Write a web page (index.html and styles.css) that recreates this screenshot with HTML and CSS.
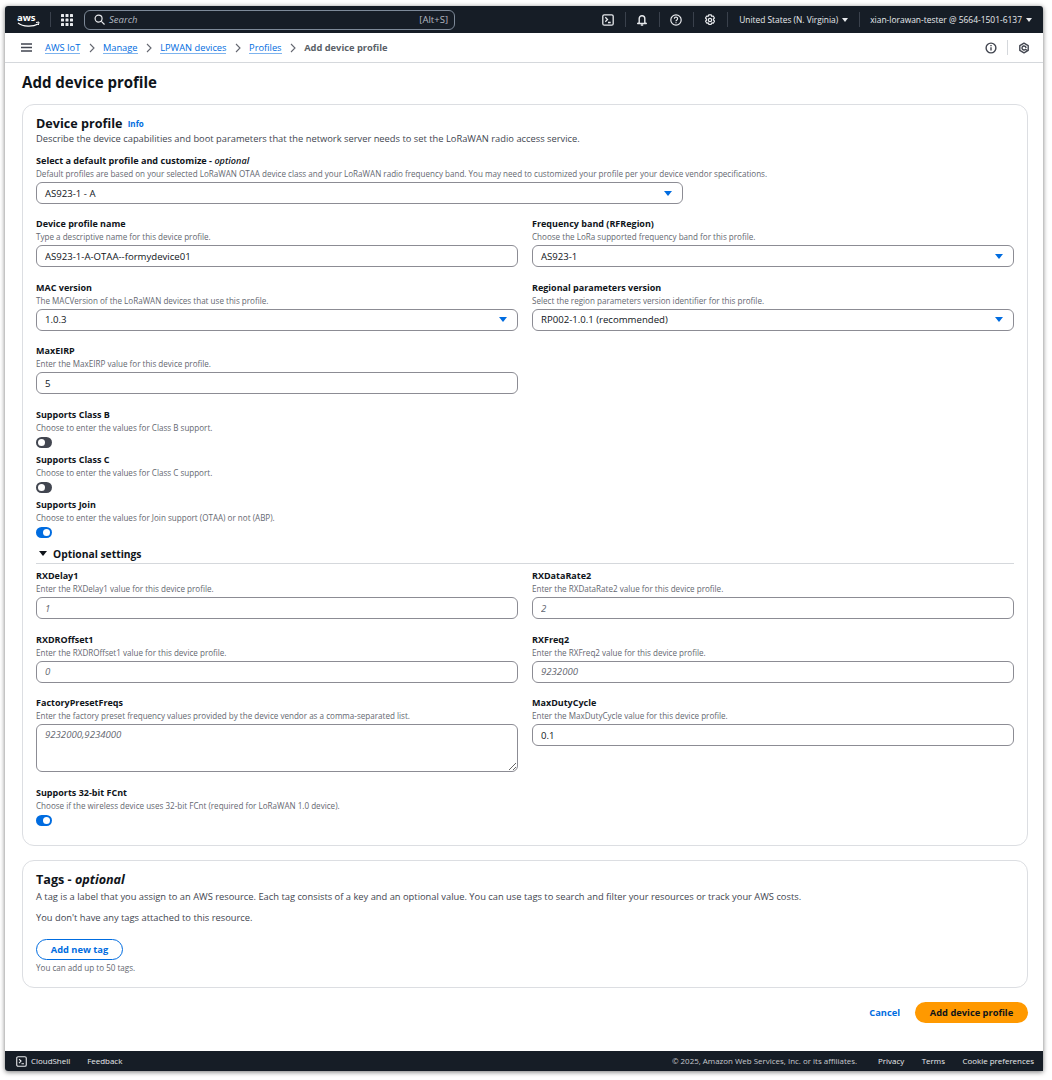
FILE: index.html
```html
<!DOCTYPE html>
<html lang="en">
<head>
<meta charset="utf-8">
<title>Add device profile</title>
<link rel="stylesheet" href="styles.css">
</head>
<body>
<div class="window">
  <header class="topbar">
    <svg class="aws-logo" viewBox="0 0 24 16" width="24" height="16"><text x="0" y="9" class="aws-text">aws</text><path d="M1 11c5 4 15 4 20 1" fill="none" stroke="#fff" stroke-width="1.2"/><path d="M19 10.500l3-.5-.6 3" fill="none" stroke="#fff" stroke-width="1"/></svg>
    <span class="top-sep"></span>
    <svg class="grid-icon" viewBox="0 0 12 12" width="12" height="12" fill="#e8eaed"><rect x="0" y="0" width="3" height="3" rx=".6"/><rect x="4.500" y="0" width="3" height="3" rx=".6"/><rect x="9" y="0" width="3" height="3" rx=".6"/><rect x="0" y="4.500" width="3" height="3" rx=".6"/><rect x="4.500" y="4.500" width="3" height="3" rx=".6"/><rect x="9" y="4.500" width="3" height="3" rx=".6"/><rect x="0" y="9" width="3" height="3" rx=".6"/><rect x="4.500" y="9" width="3" height="3" rx=".6"/><rect x="9" y="9" width="3" height="3" rx=".6"/></svg>
    <div class="search">
      <svg viewBox="0 0 12 12" width="11" height="11" fill="none" stroke="#e8eaed" stroke-width="1.300"><circle cx="5" cy="5" r="3.800"/><path d="M8 8l3.500 3.500"/></svg>
      <span class="search-text">Search</span>
      <span class="search-key">[Alt+S]</span>
    </div>
    <div class="top-right">
      <svg class="top-icon" viewBox="0 0 12 12" width="12" height="12" fill="none" stroke="#e8eaed" stroke-width="1.300"><rect x=".8" y=".8" width="10.400" height="10.400" rx="1.500"/><path d="M3.300 3.300l2.200 2.200-2.200 2.200M6 8.500h2.700"/></svg>
      <span class="top-sep"></span>
      <svg class="top-icon" viewBox="0 0 12 12" width="12" height="12" fill="none" stroke="#e8eaed"><path d="M3.200 8.800V4.500a2.800 2.800 0 015.600 0v4.300l1.500.7H1.700z" stroke-width="1.400" stroke-linejoin="round"/><path d="M4.800 11h2.400" stroke-width="1.300"/></svg>
      <span class="top-sep"></span>
      <svg class="top-icon" viewBox="0 0 12 12" width="12" height="12" fill="none" stroke="#e8eaed" stroke-width="1.200"><circle cx="6" cy="6" r="5.200"/><path d="M4.400 4.700a1.600 1.600 0 112.500 1.300c-.6.400-.9.700-.9 1.300M6 8.200v1.100"/></svg>
      <span class="top-sep"></span>
      <svg class="top-icon" viewBox="0 0 12 12" width="12" height="12" fill="none" stroke="#e8eaed" stroke-width="1.200"><path d="M4.800.8h2.400l.5 1.500 1.500-.3 1.200 2-1 1.200.1.800 1 1.200-1.200 2-1.500-.3-.6 1.500H4.800l-.5-1.500-1.500.3-1.200-2 1-1.200-.1-.8-1-1.200 1.200-2 1.500.3z" stroke-linejoin="round"/><circle cx="6" cy="6" r="1.700"/></svg>
      <span class="top-sep settings-sep"></span>
      <span class="top-menu region">United States (N. Virginia)<i class="mini-caret"></i></span>
      <span class="top-sep"></span>
      <span class="top-menu">xian-lorawan-tester @ 5664-1501-6137<i class="mini-caret"></i></span>
    </div>
  </header>

  <nav class="crumbbar">
    <svg class="menu-icon" viewBox="0 0 11 9" width="11" height="9" fill="none" stroke="#424650" stroke-width="1.400"><path d="M0 1h11M0 4.500h11M0 8h11"/></svg>
    <a class="crumb">AWS IoT</a><svg class="chev" viewBox="0 0 6 10" width="6" height="10" fill="none" stroke="#656871" stroke-width="1.100"><path d="M1 1l4 4-4 4"/></svg>
    <a class="crumb">Manage</a><svg class="chev" viewBox="0 0 6 10" width="6" height="10" fill="none" stroke="#656871" stroke-width="1.100"><path d="M1 1l4 4-4 4"/></svg>
    <a class="crumb">LPWAN devices</a><svg class="chev" viewBox="0 0 6 10" width="6" height="10" fill="none" stroke="#656871" stroke-width="1.100"><path d="M1 1l4 4-4 4"/></svg>
    <a class="crumb">Profiles</a><svg class="chev" viewBox="0 0 6 10" width="6" height="10" fill="none" stroke="#656871" stroke-width="1.100"><path d="M1 1l4 4-4 4"/></svg>
    <span class="crumb-current">Add device profile</span>
    <div class="crumb-tools">
      <svg viewBox="0 0 12 12" width="12" height="12" fill="none" stroke="#424650" stroke-width="1.400"><circle cx="6" cy="6" r="4.900"/><path d="M6 5.200v3.300M6 3.100v1.200"/></svg>
      <span class="tool-sep"></span>
      <svg viewBox="0 0 12 12" width="12" height="12" fill="none" stroke="#424650" stroke-width="1.400"><path d="M6 1.200l4.200 2.400v4.800L6 10.800 1.800 8.400V3.600z" stroke-linejoin="round"/><path d="M8 6a2 2 0 10-.6 1.400L9.500 8.500"/></svg>
    </div>
  </nav>

  <main class="content">
    <h1 class="page-title">Add device profile</h1>

    <section class="card profile-card">
      <h2 class="card-title">Device profile <a class="info">Info</a></h2>
      <p class="card-desc">Describe the device capabilities and boot parameters that the network server needs to set the LoRaWAN radio access service.</p>

      <div class="field default-field">
        <label class="label">Select a default profile and customize - <em>optional</em></label>
        <p class="desc">Default profiles are based on your selected LoRaWAN OTAA device class and your LoRaWAN radio frequency band. You may need to customized your profile per your device vendor specifications.</p>
        <div class="select default-select"><span>AS923-1 - A</span><i class="caret"></i></div>
      </div>

      <div class="form-grid">
        <div class="field">
          <label class="label">Device profile name</label>
          <p class="desc">Type a descriptive name for this device profile.</p>
          <input class="input" value="AS923-1-A-OTAA--formydevice01">
        </div>
        <div class="field">
          <label class="label">Frequency band (RFRegion)</label>
          <p class="desc">Choose the LoRa supported frequency band for this profile.</p>
          <div class="select"><span>AS923-1</span><i class="caret"></i></div>
        </div>
        <div class="field">
          <label class="label">MAC version</label>
          <p class="desc">The MACVersion of the LoRaWAN devices that use this profile.</p>
          <div class="select"><span>1.0.3</span><i class="caret"></i></div>
        </div>
        <div class="field">
          <label class="label">Regional parameters version</label>
          <p class="desc">Select the region parameters version identifier for this profile.</p>
          <div class="select"><span>RP002-1.0.1 (recommended)</span><i class="caret"></i></div>
        </div>
        <div class="field">
          <label class="label">MaxEIRP</label>
          <p class="desc">Enter the MaxEIRP value for this device profile.</p>
          <input class="input" value="5">
        </div>
      </div>

      <div class="toggles">
        <div class="toggle-field">
          <label class="label">Supports Class B</label>
          <p class="desc">Choose to enter the values for Class B support.</p>
          <span class="toggle"></span>
        </div>
        <div class="toggle-field">
          <label class="label">Supports Class C</label>
          <p class="desc">Choose to enter the values for Class C support.</p>
          <span class="toggle"></span>
        </div>
        <div class="toggle-field">
          <label class="label">Supports Join</label>
          <p class="desc">Choose to enter the values for Join support (OTAA) or not (ABP).</p>
          <span class="toggle on"></span>
        </div>
      </div>

      <div class="expander"><i class="expander-caret"></i>Optional settings</div>

      <div class="form-grid">
        <div class="field">
          <label class="label">RXDelay1</label>
          <p class="desc">Enter the RXDelay1 value for this device profile.</p>
          <input class="input" placeholder="1">
        </div>
        <div class="field">
          <label class="label">RXDataRate2</label>
          <p class="desc">Enter the RXDataRate2 value for this device profile.</p>
          <input class="input" placeholder="2">
        </div>
        <div class="field">
          <label class="label">RXDROffset1</label>
          <p class="desc">Enter the RXDROffset1 value for this device profile.</p>
          <input class="input" placeholder="0">
        </div>
        <div class="field">
          <label class="label">RXFreq2</label>
          <p class="desc">Enter the RXFreq2 value for this device profile.</p>
          <input class="input" placeholder="9232000">
        </div>
        <div class="field">
          <label class="label">FactoryPresetFreqs</label>
          <p class="desc">Enter the factory preset frequency values provided by the device vendor as a comma-separated list.</p>
          <textarea class="input textarea" placeholder="9232000,9234000"></textarea>
        </div>
        <div class="field">
          <label class="label">MaxDutyCycle</label>
          <p class="desc">Enter the MaxDutyCycle value for this device profile.</p>
          <input class="input" value="0.1">
        </div>
      </div>

      <div class="toggle-field fcnt">
        <label class="label">Supports 32-bit FCnt</label>
        <p class="desc">Choose if the wireless device uses 32-bit FCnt (required for LoRaWAN 1.0 device).</p>
        <span class="toggle on"></span>
      </div>
    </section>

    <section class="card tags-card">
      <h2 class="card-title">Tags - <em>optional</em></h2>
      <p class="card-desc tags-desc">A tag is a label that you assign to an AWS resource. Each tag consists of a key and an optional value. You can use tags to search and filter your resources or track your AWS costs.</p>
      <p class="empty-note">You don't have any tags attached to this resource.</p>
      <button class="btn-outline">Add new tag</button>
      <p class="desc tag-limit">You can add up to 50 tags.</p>
    </section>

    <div class="actions">
      <a class="cancel">Cancel</a>
      <button class="btn-primary">Add device profile</button>
    </div>
  </main>

  <footer class="footer">
    <svg viewBox="0 0 12 12" width="11" height="11" fill="none" stroke="#e8eaed" stroke-width="1.200"><rect x=".8" y=".8" width="10.400" height="10.400" rx="1.500"/><path d="M3.300 3.300l2.200 2.200-2.200 2.200M6 8.500h2.700"/></svg>
    <span class="foot-cloud">CloudShell</span>
    <span class="foot-feedback">Feedback</span>
    <span class="foot-copy">© 2025, Amazon Web Services, Inc. or its affiliates.</span>
    <span class="foot-link foot-privacy">Privacy</span>
    <span class="foot-link">Terms</span>
    <span class="foot-link">Cookie preferences</span>
  </footer>
</div>
</body>
</html>
```
FILE: styles.css
```css
* { box-sizing: border-box; }
html, body { margin: 0; padding: 0; background: #fff; }
body { font-family: "Open Sans", "Noto Sans", sans-serif; color: #0f141a; padding: 6px 0 0 5px; height: 1080px; overflow: hidden; }
p, h1, h2 { margin: 0; }
.window { width: 1038px; height: 1065px; display: flex; flex-direction: column; background: #fff; box-shadow: 0 1px 5px rgba(0,0,0,.55); border-radius: 3px 3px 0 3px; overflow: hidden; }

.topbar { height: 27px; flex: none; background: #161d26; display: flex; align-items: center; padding: 0 11px 0 12px; color: #e8eaed; }
.aws-logo { flex: none; }
.aws-text { font: 700 9.500px "Open Sans", sans-serif; fill: #fff; }
.top-sep { width: 1px; height: 15px; background: #3a414c; flex: none; }
.topbar > .top-sep { margin: 0 10px 0 9px; }
.search { margin-left: 11px; width: 371px; height: 20px; border: 1px solid #7d8998; border-radius: 6px; display: flex; align-items: center; padding: 0 6px 0 9px; font-size: 9.500px; color: #b4b9c0; }
.search-text { font-style: italic; margin-left: 4px; }
.search-key { margin-left: auto; }
.top-right { margin-left: auto; display: flex; align-items: center; gap: 10.500px; }
.settings-sep { margin-right: 1px; }
.top-menu { font-size: 8.450px; display: flex; align-items: center; gap: 4px; }
.region { font-size: 8.370px; }
.mini-caret { width: 0; height: 0; border-left: 3px solid transparent; border-right: 3px solid transparent; border-top: 4px solid #e8eaed; }

.crumbbar { height: 30px; flex: none; border-bottom: 1px solid #d5d8dc; display: flex; align-items: center; padding: 0 13px 0 16px; font-size: 9.300px; }
.menu-icon { margin-right: 13px; }
.crumb { color: #006ce0; border-bottom: 1px solid #7db3ee; line-height: 11px; }
.chev { margin: 0 8.300px; }
.crumb-current { color: #5a5f68; font-weight: 700; }
.crumb-tools { margin-left: auto; display: flex; align-items: center; gap: 10px; }
.tool-sep { width: 1px; height: 15px; background: #d5d8dc; }

.content { flex: 1; padding: 0 15px 0 17px; display: flex; flex-direction: column; }
.page-title { font-size: 15.050px; font-weight: 700; line-height: 20px; margin: 9px 0 12px; }
.card { border: 1px solid #dcdee2; border-radius: 12px; padding: 0 13px; }
.profile-card { height: 742px; padding-top: 10px; }
.tags-card { height: 128px; margin-top: 14px; padding-top: 10px; }
.card-title { font-size: 12.600px; font-weight: 700; line-height: 17px; }
.card-title em { font-weight: 700; }
.info { font-size: 8px; color: #006ce0; margin-left: 2px; vertical-align: 1px; }
.card-desc { font-size: 9.330px; line-height: 13px; color: #424650; }

.label { display: block; font-size: 9px; font-weight: 700; line-height: 14px; }
.label em { font-weight: 600; }
.default-field .label { font-size: 9.100px; }
.desc { font-size: 8.080px; line-height: 12px; color: #656871; }
.default-field { margin-top: 9px; }

.form-grid { display: grid; grid-template-columns: 482px 482px; column-gap: 14px; row-gap: 13.500px; margin-top: 13px; }
.input, .select { display: flex; align-items: center; width: 100%; height: 22px; margin-top: 2px; border: 1.500px solid #8c8c94; border-radius: 6px; padding: 0 8px; font: 9.600px "Open Sans", sans-serif; color: #0f141a; background: #fff; outline: none; }
.select.default-select { width: 647px; }
.select { justify-content: space-between; }
.caret { width: 0; height: 0; border-left: 4px solid transparent; border-right: 4px solid transparent; border-top: 5.500px solid #006ce0; margin-right: 2px; }
.input::placeholder { color: #656871; font-style: italic; opacity: 1; }
.textarea { height: 48px; padding-top: 3px; display: block; }

.toggles { display: flex; flex-direction: column; gap: 5px; margin-top: 14px; }
.toggle-field { display: flex; flex-direction: column; align-items: flex-start; }
.toggle { display: block; position: relative; width: 16px; height: 11px; margin-top: 3px; border-radius: 6px; background: #424650; }
.toggle::after { content: ""; position: absolute; top: 2px; left: 2px; width: 7px; height: 7px; border-radius: 50%; background: #fff; }
.toggle.on { background: #006ce0; }
.toggle.on::after { left: 7px; }

.expander { display: flex; align-items: center; height: 20px; margin-top: 6px; padding-left: 3px; border-bottom: 1px solid #d5d8dc; font-size: 10.300px; font-weight: 700; }
.expander-caret { width: 0; height: 0; margin-right: 6px; border-left: 4px solid transparent; border-right: 4px solid transparent; border-top: 5.500px solid #0f141a; }
.expander + .form-grid { margin-top: 5px; }
.fcnt { margin-top: 14px; }

.tags-desc { margin-top: 2px; }
.empty-note { font-size: 9.330px; line-height: 13px; color: #424650; margin-top: 8px; }
.btn-outline { display: block; margin-top: 15px; width: 87px; height: 21px; border: 1.500px solid #006ce0; border-radius: 11px; background: #fff; color: #006ce0; font: 700 9.300px "Open Sans", sans-serif; padding: 0; }
.tag-limit { margin-top: 2px; }

.actions { display: flex; justify-content: flex-end; align-items: center; margin-top: 14px; gap: 15px; }
.cancel { color: #006ce0; font-size: 9.300px; font-weight: 700; }
.btn-primary { width: 113px; height: 21px; border: 0; border-radius: 11px; background: #ff9900; color: #0f141a; font: 700 9.300px "Open Sans", sans-serif; padding: 0; }

.footer { height: 20px; flex: none; background: #161d26; display: flex; align-items: center; padding: 0 9px 0 11px; color: #e8eaed; font-size: 7.950px; }
.foot-cloud { margin-left: 4px; }
.foot-feedback { margin-left: 17px; }
.foot-copy { margin-left: auto; color: #c6c9ce; }
.foot-link { margin-left: 17.500px; }
.foot-privacy { margin-left: 21px; }
```
